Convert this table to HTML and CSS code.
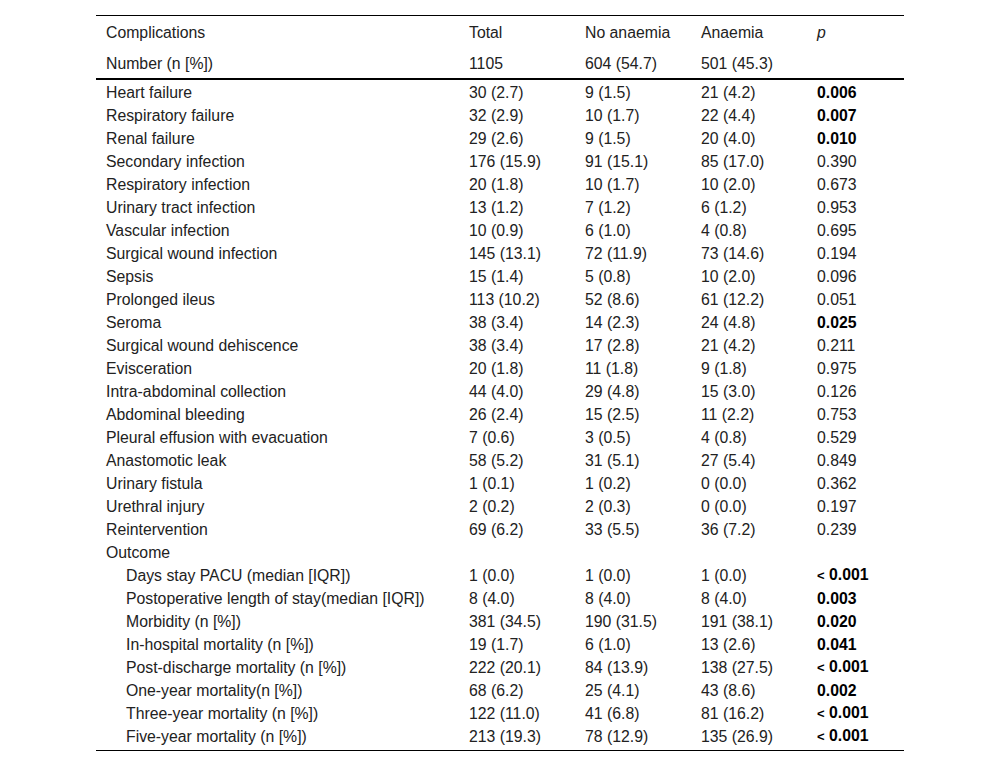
FILE: index.html
```html
<!DOCTYPE html>
<html>
<head>
<meta charset="utf-8">
<link rel="stylesheet" href="styles.css">
</head>
<body>
<table class="tbl">
<colgroup>
<col class="c1"><col class="cn"><col class="cn"><col class="cn"><col class="cp">
</colgroup>
<thead>
<tr class="h"><th>Complications</th><th>Total</th><th>No anaemia</th><th>Anaemia</th><th><i>p</i></th></tr>
<tr class="h h2"><th>Number (n [%])</th><th>1105</th><th>604 (54.7)</th><th>501 (45.3)</th><th></th></tr>
</thead>
<tbody>
<tr><td>Heart failure</td><td>30 (2.7)</td><td>9 (1.5)</td><td>21 (4.2)</td><td><b>0.006</b></td></tr>
<tr><td>Respiratory failure</td><td>32 (2.9)</td><td>10 (1.7)</td><td>22 (4.4)</td><td><b>0.007</b></td></tr>
<tr><td>Renal failure</td><td>29 (2.6)</td><td>9 (1.5)</td><td>20 (4.0)</td><td><b>0.010</b></td></tr>
<tr><td>Secondary infection</td><td>176 (15.9)</td><td>91 (15.1)</td><td>85 (17.0)</td><td>0.390</td></tr>
<tr><td>Respiratory infection</td><td>20 (1.8)</td><td>10 (1.7)</td><td>10 (2.0)</td><td>0.673</td></tr>
<tr><td>Urinary tract infection</td><td>13 (1.2)</td><td>7 (1.2)</td><td>6 (1.2)</td><td>0.953</td></tr>
<tr><td>Vascular infection</td><td>10 (0.9)</td><td>6 (1.0)</td><td>4 (0.8)</td><td>0.695</td></tr>
<tr><td>Surgical wound infection</td><td>145 (13.1)</td><td>72 (11.9)</td><td>73 (14.6)</td><td>0.194</td></tr>
<tr><td>Sepsis</td><td>15 (1.4)</td><td>5 (0.8)</td><td>10 (2.0)</td><td>0.096</td></tr>
<tr><td>Prolonged ileus</td><td>113 (10.2)</td><td>52 (8.6)</td><td>61 (12.2)</td><td>0.051</td></tr>
<tr><td>Seroma</td><td>38 (3.4)</td><td>14 (2.3)</td><td>24 (4.8)</td><td><b>0.025</b></td></tr>
<tr><td>Surgical wound dehiscence</td><td>38 (3.4)</td><td>17 (2.8)</td><td>21 (4.2)</td><td>0.211</td></tr>
<tr><td>Evisceration</td><td>20 (1.8)</td><td>11 (1.8)</td><td>9 (1.8)</td><td>0.975</td></tr>
<tr><td>Intra-abdominal collection</td><td>44 (4.0)</td><td>29 (4.8)</td><td>15 (3.0)</td><td>0.126</td></tr>
<tr><td>Abdominal bleeding</td><td>26 (2.4)</td><td>15 (2.5)</td><td>11 (2.2)</td><td>0.753</td></tr>
<tr><td>Pleural effusion with evacuation</td><td>7 (0.6)</td><td>3 (0.5)</td><td>4 (0.8)</td><td>0.529</td></tr>
<tr><td>Anastomotic leak</td><td>58 (5.2)</td><td>31 (5.1)</td><td>27 (5.4)</td><td>0.849</td></tr>
<tr><td>Urinary fistula</td><td>1 (0.1)</td><td>1 (0.2)</td><td>0 (0.0)</td><td>0.362</td></tr>
<tr><td>Urethral injury</td><td>2 (0.2)</td><td>2 (0.3)</td><td>0 (0.0)</td><td>0.197</td></tr>
<tr><td>Reintervention</td><td>69 (6.2)</td><td>33 (5.5)</td><td>36 (7.2)</td><td>0.239</td></tr>
<tr><td>Outcome</td><td></td><td></td><td></td><td></td></tr>
<tr><td class="ind">Days stay PACU (median [IQR])</td><td>1 (0.0)</td><td>1 (0.0)</td><td>1 (0.0)</td><td><b><span class="lt">&lt;</span> 0.001</b></td></tr>
<tr><td class="ind">Postoperative length of stay(median [IQR])</td><td>8 (4.0)</td><td>8 (4.0)</td><td>8 (4.0)</td><td><b>0.003</b></td></tr>
<tr><td class="ind">Morbidity (n [%])</td><td>381 (34.5)</td><td>190 (31.5)</td><td>191 (38.1)</td><td><b>0.020</b></td></tr>
<tr><td class="ind">In-hospital mortality (n [%])</td><td>19 (1.7)</td><td>6 (1.0)</td><td>13 (2.6)</td><td><b>0.041</b></td></tr>
<tr><td class="ind">Post-discharge mortality (n [%])</td><td>222 (20.1)</td><td>84 (13.9)</td><td>138 (27.5)</td><td><b><span class="lt">&lt;</span> 0.001</b></td></tr>
<tr><td class="ind">One-year mortality(n [%])</td><td>68 (6.2)</td><td>25 (4.1)</td><td>43 (8.6)</td><td><b>0.002</b></td></tr>
<tr><td class="ind">Three-year mortality (n [%])</td><td>122 (11.0)</td><td>41 (6.8)</td><td>81 (16.2)</td><td><b><span class="lt">&lt;</span> 0.001</b></td></tr>
<tr><td class="ind">Five-year mortality (n [%])</td><td>213 (19.3)</td><td>78 (12.9)</td><td>135 (26.9)</td><td><b><span class="lt">&lt;</span> 0.001</b></td></tr>
</tbody>
</table>
</body>
</html>
```
FILE: styles.css
```css
html, body {
  margin: 0;
  padding: 0;
  background: #fff;
}
body {
  padding: 15px 96px 0 96px;
  font-family: "Liberation Sans", Arial, sans-serif;
  font-size: 15.8px;
  color: #222;
}
.tbl {
  width: 808px;
  border-collapse: collapse;
  table-layout: fixed;
  border-top: 1px solid #000;
  border-bottom: 1px solid #000;
}
.c1 { width: 363px; }
.cn { width: 116px; }
.cp { width: 97px; }
.tbl th {
  font-weight: normal;
  text-align: left;
  padding: 2px 10px 0 10px;
  height: 29px;
  line-height: 18px;
}
.tbl .h2 th {
  border-bottom: 2px solid #000;
}
.tbl td {
  padding: 2px 10px 0 10px;
  height: 21px;
  line-height: 18px;
  white-space: nowrap;
}
.tbl tbody tr:last-child td {
  padding-bottom: 3px;
}
.tbl td.ind { padding-left: 30px; }
.tbl b { font-weight: bold; color: #000; }
.lt { font-size: 13px; }
```
